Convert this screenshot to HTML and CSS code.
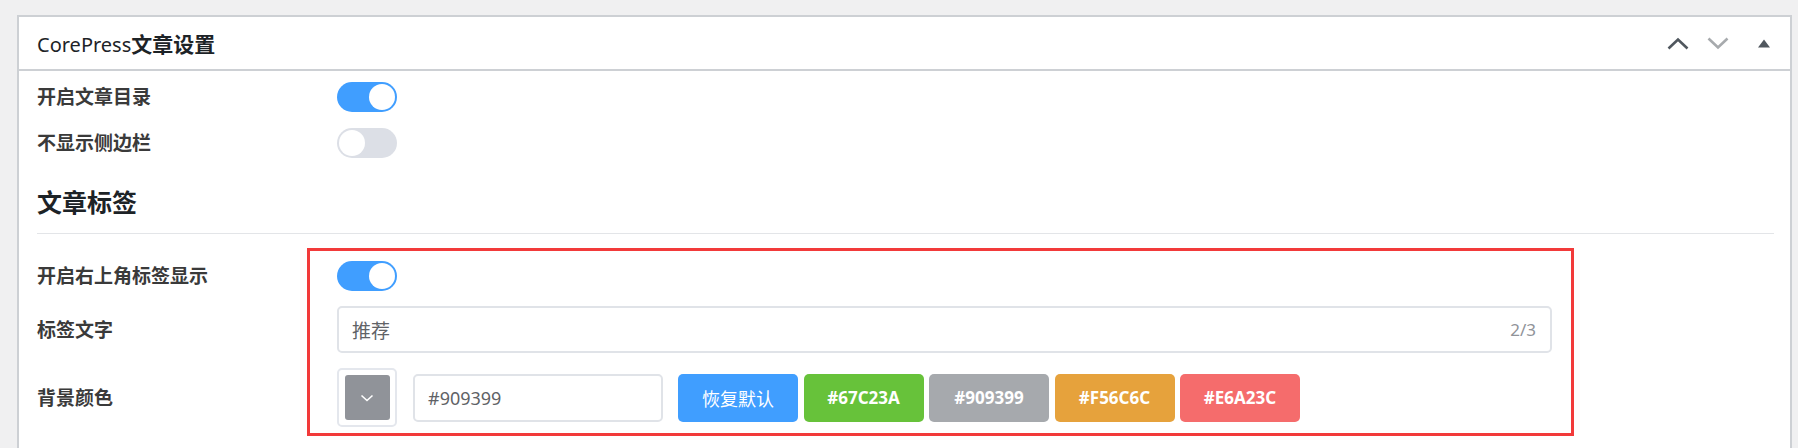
FILE: index.html
```html
<!DOCTYPE html>
<html lang="zh-CN">
<head>
<meta charset="utf-8">
<title>CorePress文章设置</title>
<link rel="stylesheet" href="styles.css">
</head>
<body>
<div class="wrap">
  <div class="postbox">
    <div class="postbox-header">
      <h2 class="hndle"><span class="brand">CorePress</span>文章设置</h2>
      <div class="handle-actions">
        <span class="act">
          <svg width="22" height="13" viewBox="0 0 22 13"><path d="M1.5 11.5 L11 2.5 L20.5 11.5" fill="none" stroke="#50575e" stroke-width="2.6"/></svg>
        </span>
        <span class="act">
          <svg width="22" height="13" viewBox="0 0 22 13"><path d="M1.5 1.5 L11 10.5 L20.5 1.5" fill="none" stroke="#a7aaad" stroke-width="2.6"/></svg>
        </span>
        <span class="act act-wide">
          <svg width="12" height="9" viewBox="0 0 12 9"><polygon points="0,8.5 6,0.5 12,8.5" fill="#50575e"/></svg>
        </span>
      </div>
    </div>
    <div class="inside">
      <div class="form-grid">
        <div class="label">开启文章目录</div>
        <div class="control"><span class="switch on"><span class="knob"></span></span></div>
        <div class="label">不显示侧边栏</div>
        <div class="control"><span class="switch"><span class="knob"></span></span></div>
      </div>

      <h3 class="section-title">文章标签</h3>

      <div class="form-grid tag-group">
        <div class="label">开启右上角标签显示</div>
        <div class="control"><span class="switch on"><span class="knob"></span></span></div>

        <div class="label">标签文字</div>
        <div class="control">
          <div class="text-input">
            <span class="value">推荐</span>
            <span class="count">2/3</span>
          </div>
        </div>

        <div class="label">背景颜色</div>
        <div class="control color-row">
          <div class="picker">
            <div class="swatch">
              <svg width="14" height="8" viewBox="0 0 14 8"><path d="M1.5 1.5 L7 6.5 L12.5 1.5" fill="none" stroke="#ffffff" stroke-width="1.6"/></svg>
            </div>
          </div>
          <div class="hex-input">#909399</div>
          <div class="btns">
            <span class="btn btn-blue">恢复默认</span>
            <span class="btn btn-preset btn-green">#67C23A</span>
            <span class="btn btn-preset btn-gray">#909399</span>
            <span class="btn btn-preset btn-orange">#F56C6C</span>
            <span class="btn btn-preset btn-red">#E6A23C</span>
          </div>
        </div>

        <div class="annotation"></div>
      </div>
    </div>
  </div>
</div>
</body>
</html>
```

FILE: styles.css
```css
html, body {
  margin: 0;
  padding: 0;
}

body {
  background: #f0f0f1;
  font-family: "Noto Sans", "Noto Sans CJK SC", sans-serif;
  color: #3c434a;
  overflow: hidden;
  height: 448px;
}

.wrap {
  padding: 15px 6px 0 17px;
}

.postbox {
  background: #ffffff;
  border: 2px solid #cdd0d4;
  min-height: 460px;
}

.postbox-header {
  height: 52px;
  display: flex;
  align-items: center;
  justify-content: space-between;
  border-bottom: 2px solid #cdd0d4;
}

.hndle {
  margin: 0;
  padding: 2px 0 0 18px;
  font-size: 21px;
  line-height: 30px;
  font-weight: 700;
  color: #1d2327;
}

.brand {
  font-weight: 400;
  font-size: 20px;
}

.handle-actions {
  display: flex;
  align-items: center;
}

.act {
  width: 40px;
  height: 40px;
  display: flex;
  align-items: center;
  justify-content: center;
}

.act-wide {
  width: 52px;
}

.inside {
  padding: 11px 16px 30px 18px;
}

.form-grid {
  display: grid;
  grid-template-columns: 300px 1fr;
  row-gap: 16px;
  align-items: center;
}

.label {
  font-size: 19px;
  font-weight: 700;
  color: #3a3a3a;
  line-height: 26px;
}

.control {
  display: flex;
  align-items: center;
}

.switch {
  width: 60px;
  height: 30px;
  box-sizing: border-box;
  border-radius: 15px;
  background: #dcdfe6;
  padding: 2px;
  display: flex;
  justify-content: flex-start;
}

.switch.on {
  background: #409eff;
  justify-content: flex-end;
}

.knob {
  width: 26px;
  height: 26px;
  border-radius: 50%;
  background: #ffffff;
}

.section-title {
  margin: 28px 0 0 0;
  padding-bottom: 15px;
  border-bottom: 1px solid #e3e5e8;
  font-size: 25px;
  line-height: 32px;
  font-weight: 700;
  color: #1d2327;
}

.tag-group {
  position: relative;
  margin-top: 27px;
  row-gap: 15px;
}

.text-input {
  width: 1215px;
  height: 47px;
  box-sizing: border-box;
  border: 2px solid #e0e3e8;
  border-radius: 5px;
  display: flex;
  align-items: center;
  justify-content: space-between;
  padding: 0 14px 0 13px;
}

.text-input .value {
  font-size: 19px;
  color: #606266;
}

.text-input .count {
  font-size: 17px;
  color: #909399;
}

.color-row {
  gap: 16px;
}

.picker {
  width: 60px;
  height: 59px;
  box-sizing: border-box;
  border: 2px solid #e4e7ed;
  border-radius: 5px;
  display: flex;
  align-items: center;
  justify-content: center;
}

.swatch {
  width: 45px;
  height: 45px;
  border-radius: 3px;
  background: #909399;
  display: flex;
  align-items: center;
  justify-content: center;
}

.hex-input {
  width: 250px;
  height: 48px;
  box-sizing: border-box;
  border: 2px solid #e0e3e8;
  border-radius: 5px;
  display: flex;
  align-items: center;
  padding-left: 13px;
  font-size: 18px;
  color: #606266;
}

.btns {
  display: flex;
  gap: 5.5px;
  margin-left: -1px;
}

.btn {
  width: 120px;
  height: 48px;
  border-radius: 5px;
  display: flex;
  align-items: center;
  justify-content: center;
  color: #ffffff;
  font-size: 18px;
}

.btn-preset {
  font-weight: 700;
  font-size: 17px;
}

.btn-blue { background: #409eff; }
.btn-green { background: #67c23a; }
.btn-gray { background: #a6a9ad; }
.btn-orange { background: #e6a23c; }
.btn-red { background: #f56c6c; }

.annotation {
  position: absolute;
  grid-column: 2;
  grid-row: 1 / 4;
  top: -13px;
  left: -30px;
  width: 1267px;
  height: 188px;
  box-sizing: border-box;
  border: 3px solid #f23a3a;
  pointer-events: none;
}
```
